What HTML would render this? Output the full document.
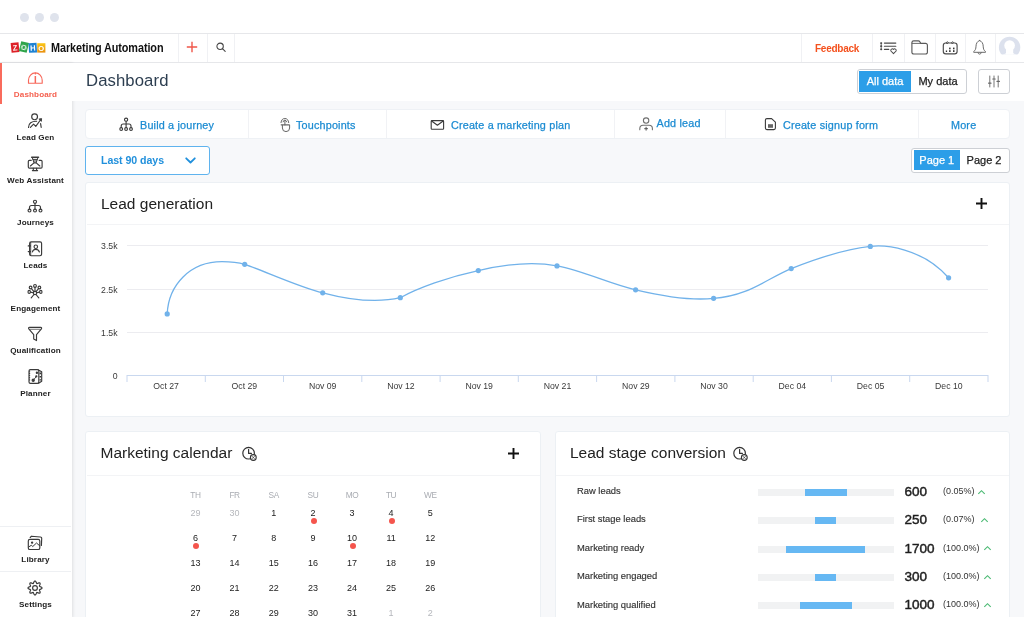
<!DOCTYPE html>
<html><head><meta charset="utf-8">
<style>
*{box-sizing:border-box;margin:0;padding:0}
html,body{width:1024px;height:617px;overflow:hidden;background:#fff;font-family:"Liberation Sans",sans-serif;color:#222}
.abs{position:absolute}
#dots i{position:absolute;top:12.5px;width:9px;height:9px;border-radius:50%;background:#dfe3ec}
#hdr{position:absolute;left:0;top:33px;width:1024px;height:29.5px;border-top:1px solid #e6e7ea;border-bottom:1px solid #e6e7ea;background:#fff}
.vd{position:absolute;top:34px;width:1px;height:28px;background:#f0f1f4}
#side{position:absolute;left:0;top:62.5px;width:71.5px;height:555px;background:#fff;box-shadow:1px 0 3px rgba(0,0,0,.10)}
.sl{position:absolute;left:0;width:71px;text-align:center;font-size:8.1px;line-height:11px;font-weight:bold;color:#222;letter-spacing:.12px;white-space:nowrap}
.sl.act{color:#f5604f}
#main{position:absolute;left:71px;top:62.5px;width:953px;height:555px;background:#f7f8fa}
.card{position:absolute;background:#fff;border:1px solid #ecf0f4;border-radius:3px}
.ct{position:absolute;font-size:15.5px;line-height:20px;color:#222;white-space:nowrap}
.qa{position:absolute;top:118.5px;font-size:10.8px;line-height:13px;color:#1b8bd2;white-space:nowrap;letter-spacing:.18px;-webkit-text-stroke:.25px #1b8bd2}
.qd{position:absolute;top:110px;width:1px;height:28px;background:#f1f2f5}
.t{position:absolute;white-space:nowrap}
.dh{position:absolute;width:30px;text-align:center;font-size:8.3px;line-height:10px;color:#a9acb2;top:490.3px;letter-spacing:-.35px}
.dn{position:absolute;width:30px;text-align:center;font-size:9px;line-height:10px;color:#222}
.dn.g{color:#b5b7bc}
.dot{position:absolute;width:6px;height:6px;border-radius:50%;background:#f5554d}
.rl{position:absolute;left:577px;font-size:9.4px;line-height:12px;color:#333;white-space:nowrap;letter-spacing:0;-webkit-text-stroke:.15px #333}
.tr{position:absolute;left:758px;width:136px;height:7px;background:#f1f2f3}
.fl{position:absolute;height:7px;background:#66b8f3}
.nm{position:absolute;left:904.6px;font-size:13.5px;line-height:16px;color:#1d1d1d;white-space:nowrap;-webkit-text-stroke:.45px #1d1d1d}
.pc{position:absolute;left:943px;font-size:9px;line-height:12px;color:#333;white-space:nowrap}
#wrap{position:absolute;left:0;top:0;width:1024px;height:617px;opacity:.999}
</style></head><body><div id="wrap">
<div id="dots"><i style="left:19.5px"></i><i style="left:34.5px"></i><i style="left:50px"></i></div>
<div id="hdr"></div>
<div id="main"></div>
<div id="side"></div>
<div class="abs" style="left:72px;top:62.5px;width:952px;height:38px;background:#fff"></div>
<div class="abs" style="left:0;top:62.5px;width:2.2px;height:41px;background:#f96b5c"></div>
<div class="abs" style="left:0;top:526px;width:71px;height:1px;background:#eef0f3"></div>
<div class="abs" style="left:0;top:571px;width:71px;height:1px;background:#eef0f3"></div>
<div class="sl act" style="top:88.8px">Dashboard</div><div class="sl" style="top:131.7px">Lead Gen</div><div class="sl" style="top:174.5px">Web Assistant</div><div class="sl" style="top:217.1px">Journeys</div><div class="sl" style="top:259.7px">Leads</div><div class="sl" style="top:302.5px">Engagement</div><div class="sl" style="top:345.0px">Qualification</div><div class="sl" style="top:387.5px">Planner</div><div class="sl" style="top:553.8px">Library</div><div class="sl" style="top:598.8px">Settings</div><svg class="abs" style="left:0;top:0" width="72" height="617" viewBox="0 0 72 617" fill="none" stroke="#3a3a3a" stroke-width="1.15" stroke-linecap="round" stroke-linejoin="round"><g stroke="#f7685b"><path d="M28.5 83.2 V80.2 A6.85 7.3 0 0 1 42.2 80.2 V83.2 Z"/><path d="M35.35 76 V83" stroke-width="1.5" stroke-linecap="butt"/><path d="M35.35 73 V74"/></g><circle cx="34.6" cy="116.8" r="2.9"/><path d="M28.5 127.4 C28.5 123.2 31.6 121.2 36.6 121.3"/><path d="M30.4 127.4 L33.6 124.2 L35.8 126.3 L40.4 120"/><path d="M39.3 119 L41.6 118.6 L41.4 121 Z" fill="#3a3a3a" stroke-width=".9"/><path d="M40.6 123.6 L41.2 127.4"/><path d="M31.2 160.4 H29.4 A1.1 1.1 0 0 0 28.3 161.5 V167 A1.1 1.1 0 0 0 29.4 168.1 H41 A1.1 1.1 0 0 0 42.1 167 V161.5 A1.1 1.1 0 0 0 41 160.4 H39.2"/><path d="M33.3 168.2 V170.4 M36.6 168.2 V170.4 M32.4 170.6 H37.6"/><path d="M31.7 157.3 H38.5" stroke-width="1.5"/><path d="M32.4 158 L34 162.6 M37.8 158 L36.2 162.6 M33 159.4 H37.2 M33.6 161 H36.6" stroke-width="1"/><path d="M30.4 166 L34 162.9 H36.2 L39.8 166"/><circle cx="35" cy="201.8" r="1.55"/><circle cx="29.5" cy="210.5" r="1.45"/><circle cx="35" cy="210.5" r="1.45"/><circle cx="40.5" cy="210.5" r="1.45"/><path d="M35 203.4 V209 M29.5 209 V207.5 A2 2 0 0 1 31.5 205.5 H38.5 A2 2 0 0 1 40.5 207.5 V209"/><rect x="29.6" y="241.8" width="12" height="13.9" rx="1.6"/><path d="M30.7 242.4 V255.2" stroke-width=".9"/><path d="M28.3 245.9 H30.4 M28.3 251.6 H30.4" stroke-width="1.3"/><circle cx="35.8" cy="246.7" r="1.75"/><path d="M32.4 252 C32.8 250.2 34.2 249.3 35.8 249.3 C37.4 249.3 38.8 250.2 39.4 252"/><circle cx="35" cy="293" r="1.7"/><circle cx="35" cy="285.9" r="1.4"/><circle cx="30.6" cy="287.5" r="1.35"/><circle cx="39.4" cy="287.5" r="1.35"/><ellipse cx="29.2" cy="291.9" rx="1.2" ry="1.5"/><ellipse cx="40.8" cy="291.9" rx="1.2" ry="1.5"/><path d="M35 287.4 V291.2 M31.5 288.6 L33.9 291.6 M38.5 288.6 L36.1 291.6 M30.5 292.1 L33.3 292.8 M39.5 292.1 L36.7 292.8 M34 294.5 L31.2 297.8 M36 294.5 L38.8 297.8"/><path d="M29.5 327.3 H40.7 A.9 .9 0 0 1 41.4 328.8 L36.5 334.6 V340.6 L33.7 339.1 V334.6 L28.8 328.8 A.9 .9 0 0 1 29.5 327.3 Z"/><path d="M30.2 329.3 H40" stroke-width=".7"/><path d="M30.4 369.6 H37.4 A1.4 1.4 0 0 1 38.8 371 V382 A1.4 1.4 0 0 1 37.4 383.4 H30.4 A1.4 1.4 0 0 1 29 382 V371 A1.4 1.4 0 0 1 30.4 369.6 Z"/><path d="M38.4 369.9 L41.7 371.8 V381.2 L38.6 383.2"/><path d="M40.3 372.6 V380.6" stroke-width="1.6" stroke-dasharray="1.6 1.7" stroke-linecap="butt"/><path d="M29.6 371 V382" stroke-width="1.2" stroke-dasharray=".2 2"/><circle cx="33.2" cy="380.3" r="1.1" fill="#3a3a3a"/><circle cx="36.3" cy="376.4" r=".55" fill="#3a3a3a"/><circle cx="36.9" cy="372.8" r=".6" fill="#3a3a3a"/><path d="M33.6 379.8 L36.1 376.8" stroke-width=".9"/><rect x="28.3" y="539.4" width="11.5" height="10.1" rx="1.6"/><path d="M30.2 537.5 L31.5 536.2 L40.4 537 A1.4 1.4 0 0 1 41.7 538.5 L41.4 545.4"/><circle cx="32.1" cy="542.6" r=".6" fill="#3a3a3a"/><path d="M28.6 547 L31.3 545.3 L32.8 546.5 L36.5 543 L39.6 545.7" stroke-width="1"/><path d="M35.00 581.00 L35.45 581.16 L35.84 581.61 L36.15 582.21 L36.38 582.83 L36.59 583.32 L36.84 583.57 L37.19 583.56 L37.67 583.37 L38.28 583.09 L38.93 582.88 L39.52 582.85 L39.95 583.05 L40.15 583.48 L40.12 584.07 L39.91 584.72 L39.63 585.33 L39.44 585.81 L39.43 586.16 L39.68 586.41 L40.17 586.62 L40.79 586.85 L41.39 587.16 L41.84 587.55 L42.00 588.00 L41.84 588.45 L41.39 588.84 L40.79 589.15 L40.17 589.38 L39.68 589.59 L39.43 589.84 L39.44 590.19 L39.63 590.67 L39.91 591.28 L40.12 591.93 L40.15 592.52 L39.95 592.95 L39.52 593.15 L38.93 593.12 L38.28 592.91 L37.67 592.63 L37.19 592.44 L36.84 592.43 L36.59 592.68 L36.38 593.17 L36.15 593.79 L35.84 594.39 L35.45 594.84 L35.00 595.00 L34.55 594.84 L34.16 594.39 L33.85 593.79 L33.62 593.17 L33.41 592.68 L33.16 592.43 L32.81 592.44 L32.33 592.63 L31.72 592.91 L31.07 593.12 L30.48 593.15 L30.05 592.95 L29.85 592.52 L29.88 591.93 L30.09 591.28 L30.37 590.67 L30.56 590.19 L30.57 589.84 L30.32 589.59 L29.83 589.38 L29.21 589.15 L28.61 588.84 L28.16 588.45 L28.00 588.00 L28.16 587.55 L28.61 587.16 L29.21 586.85 L29.83 586.62 L30.32 586.41 L30.57 586.16 L30.56 585.81 L30.37 585.33 L30.09 584.72 L29.88 584.07 L29.85 583.48 L30.05 583.05 L30.48 582.85 L31.07 582.88 L31.72 583.09 L32.32 583.37 L32.81 583.56 L33.16 583.57 L33.41 583.32 L33.62 582.83 L33.85 582.21 L34.16 581.61 L34.55 581.16 Z"/><circle cx="35" cy="588" r="2.4"/></svg>
<svg class="abs" style="left:8px;top:38px" width="42" height="18" viewBox="8 38 42 18" font-family="Liberation Sans, sans-serif" font-weight="bold" font-size="7.6" text-anchor="middle">
<defs><linearGradient id="yg" x1="0" y1="0" x2="0" y2="1"><stop offset="0" stop-color="#fbc716"/><stop offset="1" stop-color="#e98f0e"/></linearGradient></defs>
<g transform="rotate(-6 15 47.4)"><rect x="11.1" y="42.6" width="7.9" height="9.8" fill="#dd2229"/><text x="15.05" y="50.6" fill="#fff">Z</text></g>
<g transform="rotate(14 24 46.8)"><rect x="20" y="42" width="8" height="10" fill="#2fa44a"/><text x="24" y="49.9" fill="#fff">O</text></g>
<g transform="rotate(-3 32.8 47.8)"><rect x="28.8" y="43" width="8" height="9.6" fill="#1f82d2"/><text x="32.8" y="50.7" fill="#fff">H</text></g>
<rect x="37.2" y="43.2" width="8.2" height="9.4" fill="url(#yg)"/><text x="41.3" y="50.8" fill="#fff">O</text>
</svg>
<div class="t" id="ma" style="left:51px;top:40.7px;font-size:12px;line-height:14px;font-weight:bold;color:#111;letter-spacing:-.1px;transform-origin:0 50%;transform:scaleX(.905)">Marketing Automation</div>
<div class="vd" style="left:177.5px"></div><div class="vd" style="left:207px"></div><div class="vd" style="left:234px"></div>
<svg class="abs" style="left:186px;top:41px" width="12" height="12" viewBox="0 0 12 12" stroke="#f0574a" stroke-width="1.4"><path d="M6 .8 V11.2 M.8 6 H11.2"/></svg>
<svg class="abs" style="left:215px;top:41px" width="12" height="12" viewBox="0 0 12 12" fill="none" stroke="#444" stroke-width="1.05" stroke-linecap="round"><circle cx="5.1" cy="5.3" r="3.2"/><path d="M7.7 7.9 L10.2 10.4"/></svg>
<div class="t" style="left:815px;top:41.5px;font-size:10px;line-height:13px;font-weight:bold;color:#f4511e;letter-spacing:-.25px">Feedback</div>
<div class="vd" style="left:801px"></div><div class="vd" style="left:872px"></div><div class="vd" style="left:904px"></div><div class="vd" style="left:935px"></div><div class="vd" style="left:965px"></div><div class="vd" style="left:995px"></div>
<svg class="abs" style="left:874px;top:36px" width="90" height="24" viewBox="874 36 90 24" fill="none" stroke="#4a4a4a" stroke-width="1.15" stroke-linecap="round" stroke-linejoin="round"><path d="M884.4 43.1 H895.8 M884.4 46.2 H895.8 M884.4 49.3 H888.8"/><path d="M881.2 43.1 V49.3" stroke-width=".8"/><path d="M881 43.1 H881.4 M881 46.2 H881.4 M881 49.3 H881.4" stroke-width="1.7"/><path d="M893.5 53.6 L890.9 51 A1.55 1.55 0 0 1 893.5 49.4 A1.55 1.55 0 0 1 896.1 51 Z" stroke-width="1.05"/><g stroke="#5a5a5a"><path d="M911.9 42.6 A1.8 1.8 0 0 1 913.7 40.9 H918.4 A1.6 1.6 0 0 1 919.8 41.7 L920.8 43.4 H925.6 A1.8 1.8 0 0 1 927.4 45.2 V52.2 A1.8 1.8 0 0 1 925.6 54 H913.7 A1.8 1.8 0 0 1 911.9 52.2 Z"/><path d="M912.2 43.4 H920.6" stroke-width=".9"/></g><rect x="943.3" y="43" width="13.8" height="10.9" rx="2.4"/><path d="M946.4 42.6 L947.4 41.6 L948.4 42.6 L947.4 43.6 Z M951.6 42.6 L952.6 41.6 L953.6 42.6 L952.6 43.6 Z" stroke-width=".9"/><g fill="#333" stroke="none"><rect x="945.8" y="50.5" width="1.3" height="1.5"/><rect x="949.1" y="47.6" width="1.5" height="1.7"/><rect x="949.1" y="50.2" width="1.5" height="1.8"/><rect x="953" y="47.6" width="1.5" height="1.7"/><rect x="953" y="50.2" width="1.5" height="1.8"/></g></svg><svg class="abs" style="left:970px;top:37px" width="20" height="22" viewBox="970 37 20 22" fill="none" stroke="#6a6a6a" stroke-width="1" stroke-linecap="round" stroke-linejoin="round"><path d="M979.6 40.5 C977.2 41.3 976.1 43.6 976 46.2 C975.9 49 975.3 50.5 973.7 51.5 V52.3 H985.5 V51.5 C983.9 50.5 983.3 49 983.2 46.2 C983.1 43.6 982 41.3 979.6 40.5 Z"/><path d="M977.9 52.6 A1.75 2 0 0 0 981.3 52.6"/></svg><svg class="abs" style="left:996px;top:35px" width="28" height="26" viewBox="996 35 28 26"><defs><clipPath id="cp"><rect x="996" y="35" width="28" height="19.6"/></clipPath></defs><g clip-path="url(#cp)"><circle cx="1009.6" cy="47.4" r="10.7" fill="#dce1ed"/><circle cx="1009.6" cy="45.6" r="5.3" fill="#fff"/><rect x="1006" y="47" width="7.2" height="8" fill="#fff"/><ellipse cx="1009.6" cy="61.5" rx="10" ry="9" fill="#fff"/></g></svg>

<div class="t" style="left:86px;top:69.5px;font-size:16.7px;line-height:21px;color:#2d3e50;letter-spacing:.1px">Dashboard</div>
<div class="abs" style="left:857px;top:68.5px;width:110px;height:25.5px;border:1.3px solid #cdd0d5;border-radius:3px;background:#fff"></div>
<div class="abs" style="left:859px;top:71px;width:52px;height:21px;background:#2c9ee8"></div>
<div class="t" style="left:859px;width:52px;text-align:center;top:75px;font-size:11px;line-height:13px;color:#fff;-webkit-text-stroke:.25px #fff">All data</div>
<div class="t" style="left:911px;width:54px;text-align:center;top:75px;font-size:11px;line-height:13px;color:#222;-webkit-text-stroke:.25px #222">My data</div>
<div class="abs" style="left:978px;top:68.5px;width:32px;height:25.5px;border:1.3px solid #cdd0d5;border-radius:3px;background:#fff"></div>
<svg class="abs" style="left:987px;top:75px" width="14" height="13" viewBox="0 0 14 13" fill="none" stroke="#666" stroke-width="0.9" stroke-linecap="round" stroke-linejoin="round"><path d="M2.8 1 V12 M7 1 V12 M11.2 1 V12"/><path d="M1.6 8.2 H4 M5.8 4 H8.2 M10 6.4 H12.4" stroke-width="1.2"/></svg>
<div class="card" style="left:85px;top:108.5px;width:925px;height:30.5px;border-color:#eef1f5;border-radius:4px"></div>
<div class="qd" style="left:248px"></div><div class="qd" style="left:386px"></div><div class="qd" style="left:614px"></div><div class="qd" style="left:725px"></div><div class="qd" style="left:918px"></div>
<div class="qa" style="left:140px">Build a journey</div>
<div class="qa" style="left:296px">Touchpoints</div>
<div class="qa" style="left:451px">Create a marketing plan</div>
<div class="qa" style="left:656.5px;top:117px">Add lead</div>
<div class="qa" style="left:783px">Create signup form</div>
<div class="qa" style="left:951px">More</div>
<svg class="abs" style="left:100px;top:108px" width="700" height="32" viewBox="100 108 700 32" fill="none" stroke="#3a3a3a" stroke-width="1.1" stroke-linecap="round" stroke-linejoin="round"><circle cx="126.1" cy="119.7" r="1.6"/><circle cx="121.2" cy="129" r="1.4"/><circle cx="126.1" cy="129" r="1.4"/><circle cx="131" cy="129" r="1.4"/><path d="M126.1 121.4 V127.5 M121.2 127.5 V126 A2 2 0 0 1 123.2 124 H129 A2 2 0 0 1 131 126 V127.5"/><g stroke="#666" stroke-width="1"><path d="M281 122.6 A3.9 4.9 0 0 1 288.7 122.6"/><path d="M283.1 121.8 A1.8 2.2 0 0 1 286.6 121.8"/><path d="M284.9 120.6 V125"/><path d="M281.2 124.8 H289.2" stroke-width="1.2"/><path d="M282.4 125.2 V128 A3.6 3.6 0 0 0 289.6 128 V125.2"/></g><rect x="431.2" y="120.6" width="12.4" height="8.7" rx=".8"/><path d="M431.6 121 L437.4 125.2 L443.2 121"/><g stroke="#707070"><circle cx="646.1" cy="120.6" r="2.7"/><path d="M639.8 129.8 V128.4 A3.2 3.2 0 0 1 643 125.3 H649.2 A3.2 3.2 0 0 1 652.4 128.4 V129.8"/><path d="M646.1 127.2 V130.2 M644.6 128.7 H647.6" stroke-width=".9" stroke="#444"/></g><path d="M765.4 120 A1.5 1.5 0 0 1 766.9 118.6 H771.6 L775.4 122.2 V128.1 A1.5 1.5 0 0 1 773.9 129.6 H766.9 A1.5 1.5 0 0 1 765.4 128.1 Z"/><rect x="768" y="124.2" width="5" height="3.6" fill="#666" stroke="none"/></svg>
<div class="abs" style="left:85px;top:146px;width:125px;height:29px;border:1.3px solid #5fb3ee;border-radius:3px;background:#fff"></div>
<div class="t" style="left:101px;top:154px;font-size:10.6px;line-height:13px;color:#2190dc;font-weight:bold;letter-spacing:-.05px">Last 90 days</div>
<svg class="abs" style="left:184px;top:156px" width="13" height="9" viewBox="0 0 13 9" fill="none" stroke="#2190dc" stroke-width="1.8" stroke-linecap="round" stroke-linejoin="round"><path d="M2.2 2.3 L6.5 6.5 L10.8 2.3"/></svg>
<div class="abs" style="left:911px;top:147.5px;width:99px;height:25px;border:1.3px solid #cdd0d5;border-radius:3px;background:#fff"></div>
<div class="abs" style="left:913.5px;top:150px;width:46.5px;height:20px;background:#2c9ee8"></div>
<div class="t" style="left:913.5px;width:46.5px;text-align:center;top:154px;font-size:11px;line-height:13px;color:#fff;-webkit-text-stroke:.25px #fff">Page 1</div>
<div class="t" style="left:960px;width:48px;text-align:center;top:154px;font-size:11px;line-height:13px;color:#222;-webkit-text-stroke:.25px #222">Page 2</div>

<div class="card" style="left:85px;top:182px;width:925px;height:235px"></div>
<div class="abs" style="left:87px;top:224px;width:922px;height:1px;background:#f3f4f6"></div>
<div class="ct" style="left:101px;top:193.5px">Lead generation</div>
<svg class="abs" style="left:975px;top:197px" width="13" height="13" viewBox="0 0 13 13" stroke="#111" stroke-width="1.9"><path d="M6.5 1 V12 M1 6.5 H12"/></svg>
<svg class="abs" style="left:0;top:0" width="1024" height="617" viewBox="0 0 1024 617">
<rect x="127" y="245" width="861" height="1" fill="#ececf0"/>
<rect x="127" y="289" width="861" height="1" fill="#ececf0"/>
<rect x="127" y="332" width="861" height="1" fill="#ececf0"/>
<rect x="127" y="375" width="861" height="1" fill="#c9d8ef"/>
<rect x="126.5" y="375" width="1" height="7" fill="#c9d8ef"/>
<rect x="204.8" y="375" width="1" height="7" fill="#c9d8ef"/>
<rect x="283.0" y="375" width="1" height="7" fill="#c9d8ef"/>
<rect x="361.3" y="375" width="1" height="7" fill="#c9d8ef"/>
<rect x="439.6" y="375" width="1" height="7" fill="#c9d8ef"/>
<rect x="517.8" y="375" width="1" height="7" fill="#c9d8ef"/>
<rect x="596.1" y="375" width="1" height="7" fill="#c9d8ef"/>
<rect x="674.4" y="375" width="1" height="7" fill="#c9d8ef"/>
<rect x="752.7" y="375" width="1" height="7" fill="#c9d8ef"/>
<rect x="830.9" y="375" width="1" height="7" fill="#c9d8ef"/>
<rect x="909.2" y="375" width="1" height="7" fill="#c9d8ef"/>
<rect x="987.5" y="375" width="1" height="7" fill="#c9d8ef"/>
<path d="M167.2 313.9 C168.5 285 190 261.7 222 261.7 C230 261.7 238.5 262.5 244.7 264.3 C262 270 300 287.5 322.7 292.8 C350 300 378 303 400.3 297.7 C418 288 448 277 478.3 270.6 C504 264.5 532 261 557 265.9 C584 271 610 284 635.6 289.8 C662 296 690 301 713.6 298.3 C748 296.5 768 278 791.2 268.6 C818 258 846 249 870.3 246.4 C884 244.6 922 247.5 948.6 277.8" fill="none" stroke="#71b2ea" stroke-width="1.3"/>
<circle cx="167.2" cy="313.9" r="2.6" fill="#71b2ea"/>
<circle cx="244.7" cy="264.3" r="2.6" fill="#71b2ea"/>
<circle cx="322.7" cy="292.8" r="2.6" fill="#71b2ea"/>
<circle cx="400.3" cy="297.7" r="2.6" fill="#71b2ea"/>
<circle cx="478.3" cy="270.6" r="2.6" fill="#71b2ea"/>
<circle cx="557.0" cy="265.9" r="2.6" fill="#71b2ea"/>
<circle cx="635.6" cy="289.8" r="2.6" fill="#71b2ea"/>
<circle cx="713.6" cy="298.3" r="2.6" fill="#71b2ea"/>
<circle cx="791.2" cy="268.6" r="2.6" fill="#71b2ea"/>
<circle cx="870.3" cy="246.4" r="2.6" fill="#71b2ea"/>
<circle cx="948.6" cy="277.8" r="2.6" fill="#71b2ea"/>
<g font-size="8.7" fill="#3a3a3a" font-family="Liberation Sans, sans-serif">
<text x="117.5" y="248.7" text-anchor="end">3.5k</text>
<text x="117.5" y="292.7" text-anchor="end">2.5k</text>
<text x="117.5" y="335.7" text-anchor="end">1.5k</text>
<text x="117.5" y="378.7" text-anchor="end">0</text>
<text x="166.1" y="389" text-anchor="middle">Oct 27</text>
<text x="244.4" y="389" text-anchor="middle">Oct 29</text>
<text x="322.7" y="389" text-anchor="middle">Nov 09</text>
<text x="400.9" y="389" text-anchor="middle">Nov 12</text>
<text x="479.2" y="389" text-anchor="middle">Nov 19</text>
<text x="557.5" y="389" text-anchor="middle">Nov 21</text>
<text x="635.8" y="389" text-anchor="middle">Nov 29</text>
<text x="714.0" y="389" text-anchor="middle">Nov 30</text>
<text x="792.3" y="389" text-anchor="middle">Dec 04</text>
<text x="870.6" y="389" text-anchor="middle">Dec 05</text>
<text x="948.8" y="389" text-anchor="middle">Dec 10</text>
</g></svg>
<div class="card" style="left:85px;top:431px;width:456px;height:200px"></div>
<div class="abs" style="left:87px;top:475px;width:453px;height:1px;background:#f3f4f6"></div>
<div class="ct" style="left:100.5px;top:442.6px">Marketing calendar</div>
<svg class="abs" style="left:507px;top:446.5px" width="13" height="13" viewBox="0 0 13 13" stroke="#111" stroke-width="1.9"><path d="M6.5 1 V12 M1 6.5 H12"/></svg>
<div class="card" style="left:555px;top:431px;width:455px;height:200px"></div>
<div class="abs" style="left:556px;top:475px;width:453px;height:1px;background:#f3f4f6"></div>
<div class="ct" style="left:570px;top:442.6px">Lead stage conversion</div>
<svg class="abs" style="left:242px;top:446px" width="16" height="16" viewBox="0 0 16 16" fill="none" stroke="#333" stroke-width="1.2" stroke-linecap="round" stroke-linejoin="round"><circle cx="6.6" cy="7.2" r="5.8"/><path d="M6.6 3.4 V7.4 H9.4"/><circle cx="11.3" cy="11.5" r="2.9" fill="#fff" stroke-width="1.1"/><path d="M10.3 10.5 L12.3 12.5 M12.3 10.5 L10.3 12.5" stroke-width=".8"/></svg><svg class="abs" style="left:732.5px;top:446px" width="16" height="16" viewBox="0 0 16 16" fill="none" stroke="#333" stroke-width="1.2" stroke-linecap="round" stroke-linejoin="round"><circle cx="6.6" cy="7.2" r="5.8"/><path d="M6.6 3.4 V7.4 H9.4"/><circle cx="11.3" cy="11.5" r="2.9" fill="#fff" stroke-width="1.1"/><path d="M10.3 10.5 L12.3 12.5 M12.3 10.5 L10.3 12.5" stroke-width=".8"/></svg><div class="dh" style="left:180.4px">TH</div><div class="dh" style="left:219.6px">FR</div><div class="dh" style="left:258.7px">SA</div><div class="dh" style="left:297.9px">SU</div><div class="dh" style="left:337.0px">MO</div><div class="dh" style="left:376.1px">TU</div><div class="dh" style="left:415.3px">WE</div><div class="dn g" style="left:180.4px;top:508.3px">29</div><div class="dn g" style="left:219.6px;top:508.3px">30</div><div class="dn" style="left:258.7px;top:508.3px">1</div><div class="dn" style="left:297.9px;top:508.3px">2</div><div class="dn" style="left:337.0px;top:508.3px">3</div><div class="dn" style="left:376.1px;top:508.3px">4</div><div class="dn" style="left:415.3px;top:508.3px">5</div><div class="dn" style="left:180.4px;top:533.1px">6</div><div class="dn" style="left:219.6px;top:533.1px">7</div><div class="dn" style="left:258.7px;top:533.1px">8</div><div class="dn" style="left:297.9px;top:533.1px">9</div><div class="dn" style="left:337.0px;top:533.1px">10</div><div class="dn" style="left:376.1px;top:533.1px">11</div><div class="dn" style="left:415.3px;top:533.1px">12</div><div class="dn" style="left:180.4px;top:557.9px">13</div><div class="dn" style="left:219.6px;top:557.9px">14</div><div class="dn" style="left:258.7px;top:557.9px">15</div><div class="dn" style="left:297.9px;top:557.9px">16</div><div class="dn" style="left:337.0px;top:557.9px">17</div><div class="dn" style="left:376.1px;top:557.9px">18</div><div class="dn" style="left:415.3px;top:557.9px">19</div><div class="dn" style="left:180.4px;top:582.7px">20</div><div class="dn" style="left:219.6px;top:582.7px">21</div><div class="dn" style="left:258.7px;top:582.7px">22</div><div class="dn" style="left:297.9px;top:582.7px">23</div><div class="dn" style="left:337.0px;top:582.7px">24</div><div class="dn" style="left:376.1px;top:582.7px">25</div><div class="dn" style="left:415.3px;top:582.7px">26</div><div class="dn" style="left:180.4px;top:607.5px">27</div><div class="dn" style="left:219.6px;top:607.5px">28</div><div class="dn" style="left:258.7px;top:607.5px">29</div><div class="dn" style="left:297.9px;top:607.5px">30</div><div class="dn" style="left:337.0px;top:607.5px">31</div><div class="dn g" style="left:376.1px;top:607.5px">1</div><div class="dn g" style="left:415.3px;top:607.5px">2</div><div class="dot" style="left:311.0px;top:518.4px"></div><div class="dot" style="left:389.0px;top:518.4px"></div><div class="dot" style="left:193.4px;top:542.8px"></div><div class="dot" style="left:350.3px;top:542.8px"></div><div class="rl" style="top:485.1px">Raw leads</div><div class="tr" style="top:488.8px"></div><div class="fl" style="left:804.8px;width:42.2px;top:488.8px"></div><div class="nm" style="top:484.0px">600</div><div class="pc" style="top:484.8px">(0.05%)</div><svg class="abs" style="left:977.0px;top:488.5px" width="9" height="6" viewBox="0 0 9 6" fill="none" stroke="#4cba74" stroke-width="1.15"><path d="M1.3 4.9 L4.5 1.7 L7.7 4.9"/></svg><div class="rl" style="top:513.4px">First stage leads</div><div class="tr" style="top:517.1px"></div><div class="fl" style="left:815.3px;width:21.1px;top:517.1px"></div><div class="nm" style="top:512.4px">250</div><div class="pc" style="top:513.1px">(0.07%)</div><svg class="abs" style="left:980.0px;top:516.9px" width="9" height="6" viewBox="0 0 9 6" fill="none" stroke="#4cba74" stroke-width="1.15"><path d="M1.3 4.9 L4.5 1.7 L7.7 4.9"/></svg><div class="rl" style="top:541.8px">Marketing ready</div><div class="tr" style="top:545.5px"></div><div class="fl" style="left:786.2px;width:78.8px;top:545.5px"></div><div class="nm" style="top:540.7px">1700</div><div class="pc" style="top:541.5px">(100.0%)</div><svg class="abs" style="left:982.5px;top:545.2px" width="9" height="6" viewBox="0 0 9 6" fill="none" stroke="#4cba74" stroke-width="1.15"><path d="M1.3 4.9 L4.5 1.7 L7.7 4.9"/></svg><div class="rl" style="top:570.1px">Marketing engaged</div><div class="tr" style="top:573.9px"></div><div class="fl" style="left:815.3px;width:21.1px;top:573.9px"></div><div class="nm" style="top:569.1px">300</div><div class="pc" style="top:569.9px">(100.0%)</div><svg class="abs" style="left:982.5px;top:573.6px" width="9" height="6" viewBox="0 0 9 6" fill="none" stroke="#4cba74" stroke-width="1.15"><path d="M1.3 4.9 L4.5 1.7 L7.7 4.9"/></svg><div class="rl" style="top:598.5px">Marketing qualified</div><div class="tr" style="top:602.2px"></div><div class="fl" style="left:799.6px;width:52.6px;top:602.2px"></div><div class="nm" style="top:597.4px">1000</div><div class="pc" style="top:598.2px">(100.0%)</div><svg class="abs" style="left:982.5px;top:601.9px" width="9" height="6" viewBox="0 0 9 6" fill="none" stroke="#4cba74" stroke-width="1.15"><path d="M1.3 4.9 L4.5 1.7 L7.7 4.9"/></svg></div></body></html>
